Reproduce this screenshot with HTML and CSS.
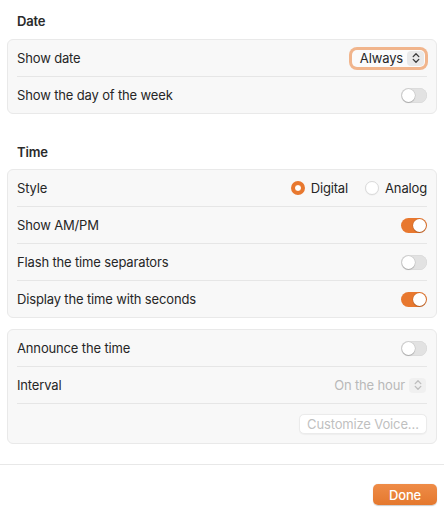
FILE: index.html
```html
<!DOCTYPE html>
<html>
<head>
<meta charset="utf-8">
<link rel="stylesheet" href="styles.css">
</head>
<body>
<div class="sheet">
  <div class="content">
    <div class="heading heading-date">Date</div>
    <div class="card">
      <div class="row">
        <span class="label">Show date</span>
        <div class="popup focused">
          <span class="popup-text">Always</span>
          <span class="stepper"><svg width="10" height="12" viewBox="0 0 10 12"><path d="M2.2 4.6 L5 1.8 L7.8 4.6 M2.2 7.4 L5 10.2 L7.8 7.4" fill="none" stroke="#3a3a3a" stroke-width="1.3" stroke-linecap="round" stroke-linejoin="round"/></svg></span>
        </div>
      </div>
      <div class="row sep">
        <span class="label">Show the day of the week</span>
        <span class="toggle"><span class="knob"></span></span>
      </div>
    </div>

    <div class="heading heading-time">Time</div>
    <div class="card">
      <div class="row">
        <span class="label">Style</span>
        <div class="radios">
          <span class="radio-item"><span class="radio on"></span>Digital</span>
          <span class="radio-item"><span class="radio"></span>Analog</span>
        </div>
      </div>
      <div class="row sep">
        <span class="label">Show AM/PM</span>
        <span class="toggle on"><span class="knob"></span></span>
      </div>
      <div class="row sep">
        <span class="label">Flash the time separators</span>
        <span class="toggle"><span class="knob"></span></span>
      </div>
      <div class="row sep">
        <span class="label">Display the time with seconds</span>
        <span class="toggle on"><span class="knob"></span></span>
      </div>
    </div>

    <div class="card card-announce">
      <div class="row">
        <span class="label">Announce the time</span>
        <span class="toggle"><span class="knob"></span></span>
      </div>
      <div class="row sep">
        <span class="label">Interval</span>
        <div class="popup disabled">
          <span class="popup-text">On the hour</span>
          <span class="stepper"><svg width="10" height="12" viewBox="0 0 10 12"><path d="M2.2 4.6 L5 1.8 L7.8 4.6 M2.2 7.4 L5 10.2 L7.8 7.4" fill="none" stroke="#bdbdbd" stroke-width="1.3" stroke-linecap="round" stroke-linejoin="round"/></svg></span>
        </div>
      </div>
      <div class="row sep row-button">
        <span class="btn-disabled">Customize Voice…</span>
      </div>
    </div>
  </div>
  <div class="footer">
    <span class="done">Done</span>
  </div>
</div>
</body>
</html>
```
FILE: styles.css
```css
html, body {
  margin: 0;
  padding: 0;
  background: #ffffff;
}
body {
  font-family: Inter, "Noto Sans", "Liberation Sans", sans-serif;
  font-size: 13px;
  letter-spacing: -0.15px;
  color: #262626;
  width: 444px;
  height: 513px;
  overflow: hidden;
}
.sheet {
  display: flex;
  flex-direction: column;
  height: 513px;
}
.content {
  padding: 0 7px;
  display: flex;
  flex-direction: column;
}
.heading {
  font-weight: 600;
  line-height: 16px;
  height: 16px;
  padding-left: 10px;
  color: #2a2a2a;
}
.heading-date {
  margin-top: 13px;
  margin-bottom: 10px;
}
.heading-time {
  margin-top: 30px;
  margin-bottom: 9px;
}
.card {
  background: #f8f8f8;
  border: 1px solid #e9e9e9;
  border-radius: 6px;
  display: flex;
  flex-direction: column;
}
.card-announce {
  margin-top: 11px;
}
.row {
  height: 36px;
  margin: 0 9px;
  display: flex;
  align-items: center;
  justify-content: space-between;
}
.row.sep {
  border-top: 1px solid #e6e6e6;
}
.row-button {
  height: 39px;
  justify-content: flex-end;
}
.label {
  line-height: 16px;
}
.popup {
  display: flex;
  align-items: center;
  gap: 4px;
  height: 18px;
  padding: 0 1px 0 8px;
  border-radius: 5px;
}
.popup.focused {
  box-shadow: 0 0 0 3px #f1b58c;
  background: #fbfbfb;
  margin-right: 2px;
  height: 17px;
}
.popup-text {
  line-height: 16px;
}
.popup.disabled .popup-text {
  color: #b9b9b9;
}
.stepper {
  width: 17px;
  height: 15px;
  border-radius: 4px;
  background: #e9e9e9;
  display: flex;
  align-items: center;
  justify-content: center;
}
.popup.disabled .stepper {
  background: #f0f0f0;
}
.toggle {
  width: 26px;
  height: 15px;
  border-radius: 8px;
  background: #e2e2e2;
  display: flex;
  align-items: center;
  justify-content: flex-start;
  padding: 0 1px;
  box-sizing: border-box;
  box-shadow: inset 0 0 0 0.5px #d6d6d6;
}
.toggle.on {
  background: #e8782f;
  justify-content: flex-end;
  box-shadow: none;
}
.knob {
  width: 13px;
  height: 13px;
  border-radius: 50%;
  background: #ffffff;
  box-shadow: 0 0 0 0.5px rgba(0,0,0,0.12), 0 1px 1px rgba(0,0,0,0.18);
}
.radios {
  display: flex;
  align-items: center;
  gap: 17px;
}
.radio-item {
  display: flex;
  align-items: center;
  gap: 6px;
  line-height: 16px;
}
.radio {
  width: 14px;
  height: 14px;
  border-radius: 50%;
  box-sizing: border-box;
  background: #ffffff;
  border: 1px solid #dadada;
  box-shadow: 0 0.5px 1px rgba(0,0,0,0.06);
}
.radio.on {
  background: #e8782f;
  border: 4.5px solid #e8782f;
  box-shadow: inset 0 0 0 10px #ffffff;
  background-clip: padding-box;
}
.btn-disabled {
  height: 20px;
  box-sizing: border-box;
  width: 128px;
  white-space: nowrap;
  display: flex;
  align-items: center;
  justify-content: center;
  background: #ffffff;
  border: 1px solid #ebebeb;
  border-radius: 5px;
  color: #bfbfbf;
  box-shadow: 0 0.5px 1px rgba(0,0,0,0.04);
}
.footer {
  margin-top: 20px;
  border-top: 1px solid #e8e8e8;
  display: flex;
  justify-content: flex-end;
  padding: 19px 7px 0 0;
}
.done {
  width: 64px;
  height: 21px;
  border-radius: 5px;
  background: linear-gradient(#ef8c47, #e4782e);
  color: #ffffff;
  font-weight: 500;
  display: flex;
  align-items: center;
  justify-content: center;
  box-shadow: 0 0.5px 1px rgba(0,0,0,0.2);
}
```
